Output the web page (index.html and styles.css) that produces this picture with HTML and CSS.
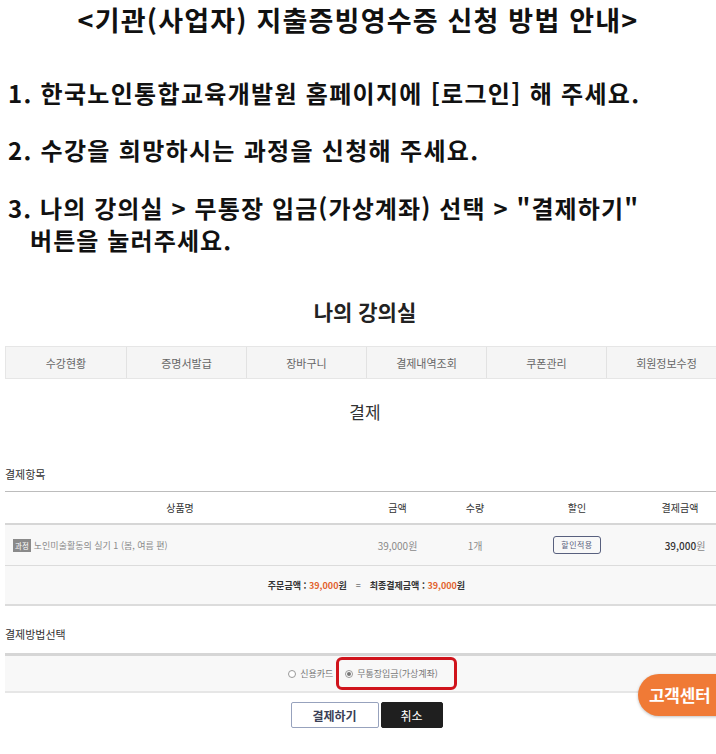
FILE: index.html
```html
<!DOCTYPE html>
<html lang="ko">
<head>
<meta charset="utf-8">
<title>지출증빙영수증 신청 방법 안내</title>
<link rel="stylesheet" href="styles.css">
</head>
<body>
<div class="page">
  <section class="guide">
    <h1 class="guide-title">&lt;기관(사업자) 지출증빙영수증 신청 방법 안내&gt;</h1>
    <p class="step">1. 한국노인통합교육개발원 홈페이지에 [로그인] 해 주세요.</p>
    <p class="step">2. 수강을 희망하시는 과정을 신청해 주세요.</p>
    <p class="step step-last">3. 나의 강의실 &gt; 무통장 입금(가상계좌) 선택 &gt; "결제하기"<br><span class="indent">버튼을 눌러주세요.</span></p>
  </section>

  <section class="shot">
    <h2 class="room-title">나의 강의실</h2>
    <nav class="tabs">
      <div class="tab">수강현황</div>
      <div class="tab">증명서발급</div>
      <div class="tab">장바구니</div>
      <div class="tab">결제내역조회</div>
      <div class="tab">쿠폰관리</div>
      <div class="tab">회원정보수정</div>
    </nav>

    <h3 class="pay-title">결제</h3>

    <div class="label">결제항목</div>
    <div class="table">
      <div class="row head">
        <div class="c1">상품명</div>
        <div class="c2">금액</div>
        <div class="c3">수량</div>
        <div class="c4">할인</div>
        <div class="c5">결제금액</div>
      </div>
      <div class="row item">
        <div class="c1 name"><span class="tag">과정</span>노인미술활동의 실기 1 (봄, 여름 편)</div>
        <div class="c2">39,000원</div>
        <div class="c3">1개</div>
        <div class="c4"><span class="coupon">할인적용</span></div>
        <div class="c5 final">39,000<span class="won">원</span></div>
      </div>
      <div class="row total">
        <span>주문금액 : <em>39,000</em>원</span>
        <span class="eq">=</span>
        <span>최종결제금액 : <em>39,000</em>원</span>
      </div>
    </div>

    <div class="label label-method">결제방법선택</div>
    <div class="method">
      <label class="opt"><span class="radio"></span>신용카드</label>
      <label class="opt picked"><span class="radio on"></span>무통장입금(가상계좌)</label>
    </div>

    <div class="actions">
      <button class="btn btn-pay">결제하기</button>
      <button class="btn btn-cancel">취소</button>
    </div>
  </section>

  <div class="cs">고객센터</div>
</div>
</body>
</html>
```

FILE: styles.css
```css
* { box-sizing: border-box; }
html, body { margin: 0; padding: 0; background: #fff; }
body {
  font-family: "Noto Sans CJK KR", "Noto Sans", sans-serif;
  color: #111;
  width: 716px;
  height: 754px;
  overflow: hidden;
}
.page { position: relative; width: 716px; height: 754px; overflow: hidden; }

/* guide text */
.guide { padding: 0 0 0 8px; }
.guide-title {
  margin: 0;
  font-size: 27px;
  line-height: 40px;
  font-weight: 700;
  text-align: center;
  padding-right: 8px;
  letter-spacing: 1.2px;
  white-space: nowrap;
}
.step {
  margin: 0;
  font-size: 24px;
  line-height: 32px;
  font-weight: 700;
  letter-spacing: 1.3px;
  white-space: nowrap;
}
.step:nth-of-type(1) { margin-top: 37px; }
.step:nth-of-type(2) { margin-top: 25px; }
.step:nth-of-type(3) { margin-top: 26px; }
.step-last { letter-spacing: 1.1px; }
.indent { padding-left: 22px; }

/* embedded page */
.shot { width: 720px; margin-left: 5px; color: #333; }
.room-title {
  margin: 40px 0 0;
  text-align: center;
  font-size: 21px;
  line-height: 30px;
  font-weight: 700;
  color: #222;
}
.tabs {
  margin-top: 20px;
  display: grid;
  grid-template-columns: repeat(6, 120px);
  border: 1px solid #e6e6e6;
  background: #f5f5f5;
  height: 33px;
}
.tab {
  display: flex;
  align-items: center;
  justify-content: center;
  font-size: 11px;
  color: #666;
  border-left: 1px solid #e2e2e2;
}
.tab:first-child { border-left: none; }

.pay-title {
  margin: 21px 0 0;
  text-align: center;
  font-size: 17px;
  line-height: 24px;
  font-weight: 400;
  color: #333;
}
.label {
  margin-top: 42px;
  font-size: 11px;
  line-height: 16px;
  color: #333;
}
.label-method { margin-top: 20px; }

.table { margin-top: 9px; border-top: 1px solid #bcbcbc; width: 711px; }
.row {
  display: grid;
  grid-template-columns: 350px 85px 70px 134px 72px;
  align-items: center;
  font-size: 10px;
}
.row > div { text-align: center; }
.head { height: 33px; border-bottom: 2px solid #d6d6d6; color: #333; }
.item { height: 41px; background: #f8f8f8; border-bottom: 1px solid #dcdcdc; color: #8a8a8a; }
.item .c2, .item .c3 { color: #8a8a8a; }
.item .name { text-align: left; padding-left: 8px; display: flex; align-items: center; font-size: 9px; }
.tag {
  display: inline-block;
  background: #8a8a8a;
  color: #fff;
  font-size: 7.5px;
  line-height: 13px;
  padding: 0 2px;
  margin-right: 3px;
}
.coupon {
  display: inline-block;
  border: 1px solid #58607e;
  border-radius: 3px;
  color: #58607e;
  font-size: 8px;
  line-height: 16px;
  padding: 0 7px;
  letter-spacing: 0.5px;
}
.item .final { color: #333; font-size: 10px; font-weight: 500; padding-left: 10px; }
.final .won { color: #888; font-weight: 400; }
.total {
  display: flex;
  justify-content: center;
  gap: 6px;
  height: 40px;
  background: #f8f8f8;
  border-bottom: 2px solid #dcdcdc;
  font-weight: 700;
  font-size: 9px;
  color: #333;
  padding-left: 12px;
}
.total em { font-style: normal; color: #e2622e; }
.total .eq { font-weight: 400; padding: 0 3px; }

.method {
  margin-top: 11px;
  width: 711px;
  height: 40px;
  border-top: 3px solid #d6d6d6;
  border-bottom: 2px solid #e6e6e6;
  background: #f8f8f8;
  display: flex;
  align-items: center;
  justify-content: center;
  gap: 1px;
  font-size: 9px;
  color: #777;
  padding-left: 22px;
}
.opt { display: flex; align-items: center; gap: 4px; padding: 0 2px; }
.picked {
  border: 3px solid #d0141c;
  border-radius: 6px;
  height: 33px;
  padding: 0 16px 0 6px;
}
.radio {
  width: 8px; height: 8px;
  border: 1px solid #999;
  border-radius: 50%;
  background: #fff;
  position: relative;
}
.radio.on::after {
  content: "";
  position: absolute;
  left: 1px; top: 1px;
  width: 4px; height: 4px;
  border-radius: 50%;
  background: #777;
}

.actions {
  margin-top: 9px;
  display: flex;
  justify-content: center;
  gap: 2px;
  width: 711px;
  padding-left: 12px;
}
.btn {
  font-family: inherit;
  height: 26px;
  font-size: 12px;
  font-weight: 700;
  border-radius: 2px;
  cursor: pointer;
}
.btn-pay { width: 88px; background: #fff; border: 1px solid #97a2bd; color: #3a4056; }
.btn-cancel { width: 62px; background: #1f1f1f; border: 1px solid #1f1f1f; color: #fff; font-weight: 400; }

.cs {
  position: absolute;
  left: 638px;
  top: 674px;
  width: 100px;
  height: 42px;
  border-radius: 21px;
  background: #f07a36;
  color: #fff;
  font-size: 17px;
  font-weight: 700;
  line-height: 42px;
  padding-left: 11px;
  letter-spacing: -0.3px;
  box-shadow: 0 1px 3px rgba(0,0,0,0.25);
}
```
